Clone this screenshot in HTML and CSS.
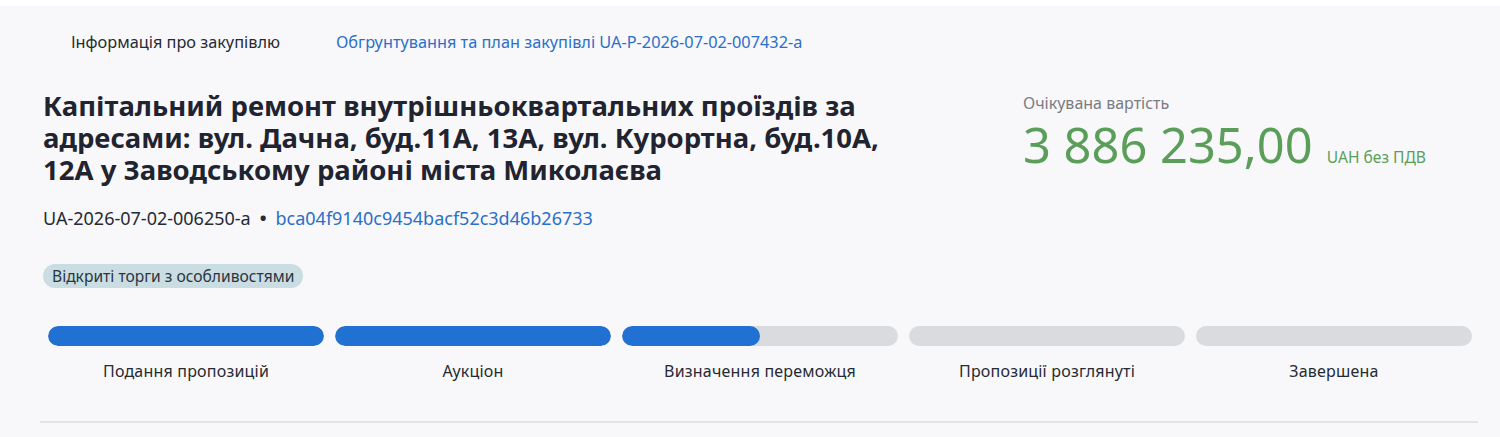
FILE: index.html
```html
<!DOCTYPE html>
<html lang="uk">

<head>
    <meta charset="UTF-8">
    <meta name="viewport" content="width=device-width, initial-scale=1.0">
    <title>Закупівля UA-2026-07-02-006250-a</title>
    <link rel="stylesheet" href="styles.css">
</head>

<body>
    <div class="tender-panel">
        <nav class="tabs">
            <span class="tab active">Інформація про закупівлю</span>
            <a class="tab link" href="#">Обгрунтування та план закупівлі UA-P-2026-07-02-007432-a</a>
        </nav>

        <div class="tender-head">
            <div class="tender-info">
                <h1 class="tender-title">Капітальний ремонт внутрішньоквартальних проїздів за адресами: вул. Дачна, буд.11А, 13А, вул. Курортна, буд.10А, 12А у Заводському районі міста Миколаєва</h1>
                <div class="tender-ids">
                    <span>UA-2026-07-02-006250-a</span>
                    <span class="dot">•</span>
                    <a href="#">bca04f9140c9454bacf52c3d46b26733</a>
                </div>
                <span class="badge">Відкриті торги з особливостями</span>
            </div>

            <div class="tender-price">
                <div class="price-label">Очікувана вартість</div>
                <div class="price-row">
                    <span class="price-value">3 886 235,00</span>
                    <span class="price-currency">UAH без ПДВ</span>
                </div>
            </div>
        </div>

        <div class="stages">
            <div class="stage">
                <div class="stage-bar"><div class="stage-fill" style="width: 100%"></div></div>
                <div class="stage-name">Подання пропозицій</div>
            </div>
            <div class="stage">
                <div class="stage-bar"><div class="stage-fill" style="width: 100%"></div></div>
                <div class="stage-name">Аукціон</div>
            </div>
            <div class="stage">
                <div class="stage-bar"><div class="stage-fill" style="width: 50%"></div></div>
                <div class="stage-name">Визначення переможця</div>
            </div>
            <div class="stage">
                <div class="stage-bar"><div class="stage-fill" style="width: 0%"></div></div>
                <div class="stage-name">Пропозиції розглянуті</div>
            </div>
            <div class="stage">
                <div class="stage-bar"><div class="stage-fill" style="width: 0%"></div></div>
                <div class="stage-name">Завершена</div>
            </div>
        </div>

        <div class="divider"></div>
    </div>
</body>

</html>
```

FILE: styles.css
```css
* {
    margin: 0;
    padding: 0;
    box-sizing: border-box;
}

body {
    font-family: 'Noto Sans', 'Open Sans', sans-serif;
    background: #ffffff;
    color: #1f2430;
    padding-top: 6px;
}

a {
    color: #2a6fc9;
    text-decoration: none;
}

.tender-panel {
    background: #f8f8fa;
    min-height: 431px;
    padding: 24px 22px 0 43px;
}

.tabs {
    display: flex;
    gap: 56px;
    padding-left: 28px;
    font-size: 16.3px;
    line-height: 24px;
}

.tab.active {
    color: #262a33;
}

.tender-head {
    display: flex;
    margin-top: 36px;
}

.tender-info {
    width: 980px;
}

.tender-title {
    max-width: 880px;
    font-size: 27.5px;
    line-height: 32px;
    font-weight: 700;
    color: #1f2430;
}

.tender-ids {
    display: flex;
    align-items: center;
    gap: 9px;
    margin-top: 20px;
    font-size: 18px;
    line-height: 24px;
    color: #262a33;
}

.tender-ids .dot {
    font-size: 18px;
    font-weight: 700;
}

.badge {
    display: inline-block;
    margin-top: 34px;
    padding: 0 9px;
    background: #c9dde2;
    color: #2c3440;
    border-radius: 12px;
    font-size: 15.6px;
    line-height: 24px;
}

.tender-price {
    margin-top: 2px;
}

.price-label {
    font-size: 16px;
    line-height: 22px;
    color: #7a7c82;
}

.price-row {
    display: flex;
    align-items: baseline;
    gap: 14px;
    margin-top: 1px;
    color: #5a9e5a;
}

.price-value {
    font-size: 48.8px;
    line-height: 58px;
    font-weight: 400;
}

.price-currency {
    font-size: 15.6px;
}

.stages {
    display: flex;
    gap: 11px;
    margin: 38px 6px 0 5px;
}

.stage {
    flex: 1;
}

.stage-bar {
    height: 20px;
    border-radius: 10px;
    background: #d9dbde;
    overflow: hidden;
}

.stage-fill {
    height: 100%;
    border-radius: 10px;
    background: #2171d3;
}

.stage-name {
    margin-top: 14px;
    text-align: center;
    font-size: 16px;
    line-height: 22px;
    letter-spacing: 0.2px;
    color: #262a33;
}

.divider {
    margin: 39px 0 0 -3px;
    height: 2px;
    background: #e3e4e8;
}
```
